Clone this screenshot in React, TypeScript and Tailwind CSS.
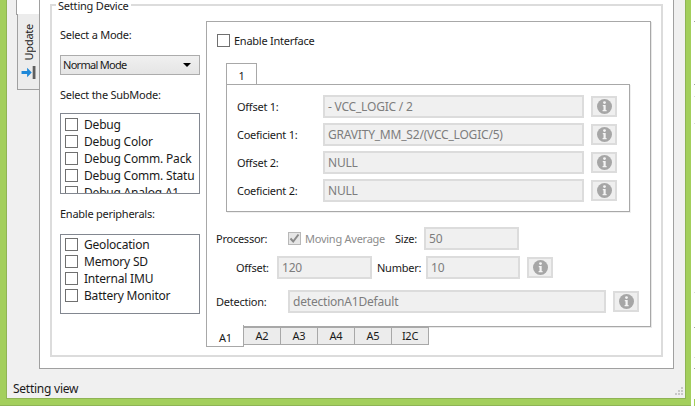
const font = "font-['Noto_Sans','Open_Sans',sans-serif] text-[11px] leading-[16px] tracking-[-0.25px] text-[#1a1a1a]";
const valueText = "text-[12px] tracking-[-0.2px]";

const ghostTicks = [
  { top: 21, color: "bg-[#a8a8a8]" },
  { top: 84, color: "bg-[#a8a8a8]" },
  { top: 96, color: "bg-[#dcdcdc]" },
  { top: 123, color: "bg-[#dcdcdc]" },
  { top: 292, color: "bg-[#dcdcdc]" },
  { top: 327, color: "bg-[#a8a8a8]" },
  { top: 357, color: "bg-[#dcdcdc]" },
  { top: 368, color: "bg-[#a8a8a8]" },
];

function Check({ label, disabled, checked, gap = "gap-[6px]" }: { label: string; disabled?: boolean; checked?: boolean; gap?: string }) {
  return (
    <div className={`flex h-[17px] items-center ${gap}`}>
      <div
        className={`flex h-[13px] w-[13px] shrink-0 items-center justify-center border ${
          disabled ? "border-[#b8b8b8] bg-[#e6e6e6]" : "border-[#707070] bg-white"
        }`}
      >
        {checked ? (
          <svg width="11" height="11" viewBox="0 0 11 11">
            <path d="M1.5 5.5 L4.2 8.5 L9.5 1.5" fill="none" stroke="#8a8a8a" strokeWidth="2" />
          </svg>
        ) : null}
      </div>
      <span className={`whitespace-nowrap ${disabled ? "text-[#8c8c8c]" : ""}`}>{label}</span>
    </div>
  );
}

function Field({ value, className }: { value: string; className: string }) {
  return (
    <div
      className={`flex h-[23px] items-center overflow-hidden whitespace-nowrap border-2 border-[#dcdcdc] bg-[#f0f0f0] pl-[3px] pt-[1px] text-[#7d7d7d] ${valueText} ${className}`}
    >
      {value}
    </div>
  );
}

function InfoButton({ className }: { className: string }) {
  return (
    <div className={`flex h-[21px] w-[26px] items-center justify-center border-2 border-[#dcdcdc] bg-[#efefef] ${className}`}>
      <svg width="15" height="15" viewBox="0 0 15 15">
        <circle cx="7.5" cy="7.5" r="7.5" fill="#a6a6a6" />
        <circle cx="7.5" cy="3.6" r="1.4" fill="#f4f4f4" />
        <path d="M5.8 6 H8.7 V11 H9.6 V12.2 H5.6 V11 H6.5 V7.2 H5.8 Z" fill="#f4f4f4" />
      </svg>
    </div>
  );
}

const offsets = [
  { label: "Offset 1:", value: "- VCC_LOGIC / 2" },
  { label: "Coeficient 1:", value: "GRAVITY_MM_S2/(VCC_LOGIC/5)" },
  { label: "Offset 2:", value: "NULL" },
  { label: "Coeficient 2:", value: "NULL" },
];

const subModes = ["Debug", "Debug Color", "Debug Comm. Pack", "Debug Comm. Statu", "Debug Analog A1"];
const peripherals = ["Geolocation", "Memory SD", "Internal IMU", "Battery Monitor"];
const tabs = ["A2", "A3", "A4", "A5", "I2C"];

export default function App() {
  return (
    <div className={`relative h-[411px] w-[695px] overflow-hidden bg-white ${font}`}>
      <div className="h-[406px] w-[691px] border-b border-[#8fb455] bg-[#a3cf5c] pb-[6px] pl-[6px] pr-[5px]">
        <div className="flex h-full flex-col border-b border-l border-r border-[#8fb455] bg-[#f0f0f0]">
          <div className="flex h-[369px] shrink-0 pl-[10px]">
            {/* side tabs */}
            <div className="w-[22px] shrink-0">
              <div className="-ml-px h-[15px] w-[23px] border-b border-l border-[#a0a0a0] bg-white" />
              <div className="-mt-px flex h-[76px] w-[22px] flex-col items-center justify-end border-b border-l border-[#a0a0a0] bg-[#ececec] pb-[10px]">
                <span className="mb-[6px] rotate-180 [writing-mode:vertical-rl]">Update</span>
                <svg width="15" height="13" viewBox="0 0 15 14">
                  <path d="M12 0 H15 V14 H12 Z" fill="#5f5f5f" />
                  <path d="M0 5.5 H6 V2 L11 7 L6 12 V8.5 H0 Z" fill="#1e88d8" />
                </svg>
              </div>
            </div>

            {/* page */}
            <div className="h-full w-[635px] border-b border-l border-r border-[#a0a0a0] bg-white pl-[10px] pt-[4px]">
              <div className="relative flex h-[353px] w-[613px] border-2 border-[#dcdcdc] pl-[8px]">
                <span className="absolute left-[4px] top-[-8px] bg-white px-[2px] tracking-[-0.2px]">Setting Device</span>

                <div className="w-[140px] shrink-0">
                  <div className="mt-[21px] h-[16px]">Select a Mode:</div>
                  <div className="mt-[12px] flex h-[20px] items-center justify-between border border-[#acacac] bg-gradient-to-b from-[#f0f0f0] to-[#e5e5e5] px-[2px] pr-[8px]">
                    <span className="tracking-[-0.7px]">Normal Mode</span>
                    <div className="h-0 w-0 border-l-[4px] border-r-[4px] border-t-[4px] border-l-transparent border-r-transparent border-t-black" />
                  </div>
                  <div className="mt-[12px] h-[16px]">Select the SubMode:</div>
                  <div className={`mt-[10px] h-[81px] overflow-hidden border border-[#828790] pl-[4px] pt-[2px] ${valueText}`}>
                    {subModes.map((mode) => (
                      <Check key={mode} label={mode} />
                    ))}
                  </div>
                  <div className="mt-[12px] h-[16px]">Enable peripherals:</div>
                  <div className={`mt-[12px] h-[80px] overflow-hidden border border-[#828790] pl-[4px] pt-[1px] ${valueText}`}>
                    {peripherals.map((item) => (
                      <Check key={item} label={item} />
                    ))}
                  </div>
                </div>

                <div className="ml-[6px] w-[445px] shrink-0 pt-[15px]">
                  <div className="h-[306px] border border-[#a8a8a8] pl-[10px] pt-[10px] shadow-[1px_1px_0_#e8e8e8]">
                    <Check label="Enable Interface" gap="gap-[4px]" />
                    <div className="ml-[9px] mt-[14px] flex h-[22px] w-[31px] items-center justify-center border-l border-r border-t border-[#a8a8a8] bg-white pt-[2px]">
                      1
                    </div>
                    <div className="-mt-px ml-[9px] h-[128px] w-[404px] border border-[#a8a8a8] pl-[10px] pt-[10px] shadow-[1px_1px_0_#f0f0f0]">
                      {offsets.map((row) => (
                        <div key={row.label} className="mb-[5px] flex h-[23px] items-center">
                          <span className="w-[86px] shrink-0">{row.label}</span>
                          <Field value={row.value} className="w-[261px]" />
                          <InfoButton className="ml-[7px]" />
                        </div>
                      ))}
                    </div>
                    <div className="mt-[15px] flex h-[23px] items-center">
                      <span className="-ml-px w-[72px] shrink-0">Processor:</span>
                      <Check label="Moving Average" disabled checked gap="gap-[4px]" />
                      <span className="ml-[10px] w-[29px] shrink-0">Size:</span>
                      <Field value="50" className="w-[95px]" />
                    </div>
                    <div className="mt-[6px] flex h-[23px] items-center">
                      <span className="ml-[19px] w-[41px] shrink-0">Offset:</span>
                      <Field value="120" className="w-[95px]" />
                      <span className="ml-[5px] w-[49px] shrink-0">Number:</span>
                      <Field value="10" className="w-[94px]" />
                      <InfoButton className="ml-[7px]" />
                    </div>
                    <div className="mt-[11px] flex h-[23px] items-center">
                      <span className="-ml-px w-[72px] shrink-0">Detection:</span>
                      <Field value="detectionA1Default" className="w-[318px]" />
                      <InfoButton className="ml-[7px]" />
                    </div>
                  </div>
                  <div className="-mt-[2px] flex items-start">
                    <div className="flex h-[22px] w-[38px] items-center justify-center border-b border-l border-r border-[#a8a8a8] bg-white pl-[1px] pt-[4px]">A1</div>
                    {tabs.map((tab) => (
                      <div
                        key={tab}
                        className="mt-[2px] flex h-[18px] w-[37px] items-center justify-center border-b border-r border-t border-[#a8a8a8] bg-[#ececec]"
                      >
                        {tab}
                      </div>
                    ))}
                  </div>
                </div>
              </div>
            </div>
          </div>

          <div className="relative flex-1 pl-[6px] pt-[12px]">
            <span className="text-[12px] tracking-[-0.25px]">Setting view</span>
            <svg width="9" height="9" viewBox="0 0 9 9" className="absolute bottom-[2px] right-[2px]">
              <path d="M7 0h2v2H7zM4 3h2v2H4zM7 3h2v2H7zM1 6h2v2H1zM4 6h2v2H4zM7 6h2v2H7z" fill="#c8c8c8" />
            </svg>
          </div>
        </div>
      </div>

      {/* leftover pixels at the screenshot's right edge */}
      {ghostTicks.map((tick) => (
        <div key={tick.top} className={`absolute right-0 h-px w-px ${tick.color}`} style={{ top: tick.top }} />
      ))}
      <div className="absolute right-0 top-[399px] h-[7px] w-px bg-[#a3cf5c]" />
    </div>
  );
}
